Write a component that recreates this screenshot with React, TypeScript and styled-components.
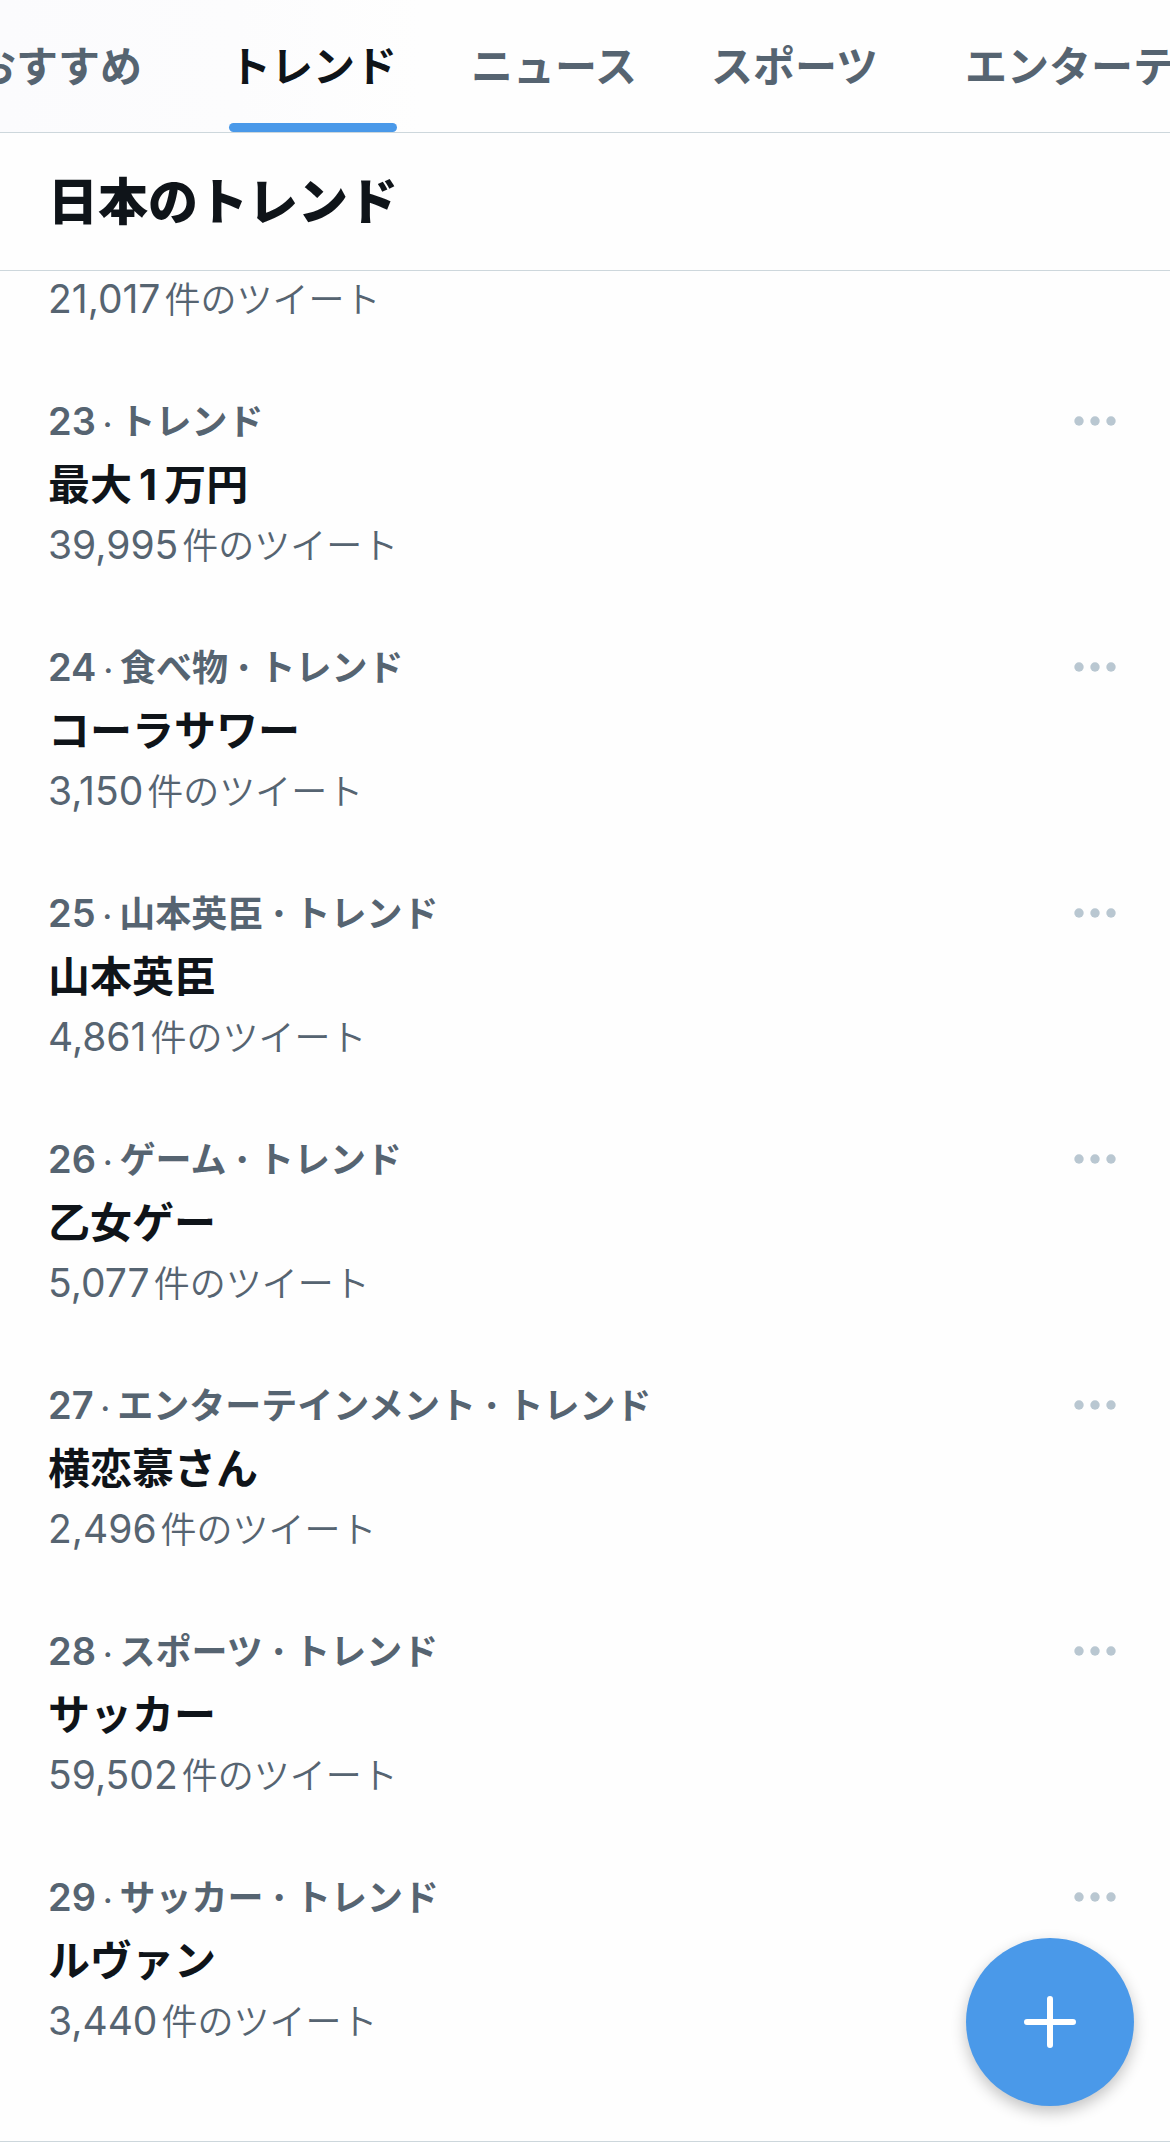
import React from 'react';
import styled, { createGlobalStyle } from 'styled-components';

const colors = {
  text: '#0f1419',
  muted: '#566471',
  line: '#cdd7dc',
  dots: '#b9c7d1',
  accent: '#4a99e9',
};

const GlobalStyle = createGlobalStyle`
  * {
    box-sizing: border-box;
  }
  body {
    margin: 0;
    background: #fefefe;
    color: ${colors.text};
    font-family: Inter, 'Noto Sans CJK JP', sans-serif;
    -webkit-font-smoothing: antialiased;
  }
  button {
    border: 0;
    background: none;
    font: inherit;
    cursor: pointer;
  }
`;

const Page = styled.div`
  min-height: 100vh;
  overflow: hidden;
  border-bottom: 1px solid ${colors.line};
`;

const TabBar = styled.nav`
  overflow: hidden;
  border-bottom: 1px solid ${colors.line};
  background: linear-gradient(to right, #fbfbfd, #fcfcfd 20%, #fefefe 36%);
`;

const TabList = styled.div`
  display: flex;
  width: max-content;
  margin-left: -76px;
`;

const Tab = styled.button<{ $active?: boolean; $wide?: boolean }>`
  display: flex;
  flex: none;
  height: 132px;
  padding: 0 ${(p) => (p.$wide ? 50 : 37)}px;
  color: ${(p) => (p.$active ? colors.text : colors.muted)};
  font-family: 'Noto Sans CJK JP', sans-serif;
  font-size: 42px;
  font-weight: 700;
  white-space: nowrap;
`;

const TabLabel = styled.span<{ $active?: boolean }>`
  display: flex;
  align-items: center;
  height: 132px;
  padding-bottom: 6px;
  position: relative;

  &::after {
    content: '';
    position: absolute;
    right: 0;
    bottom: 0;
    left: 0;
    height: 9px;
    border-radius: 5px;
    background: ${(p) => (p.$active ? colors.accent : 'transparent')};
  }
`;

const Header = styled.header`
  display: flex;
  align-items: center;
  height: 138px;
  padding: 0 48px 7px;
  border-bottom: 1px solid ${colors.line};
`;

const Heading = styled.h1`
  margin: 0;
  font-family: 'Noto Sans CJK JP', sans-serif;
  font-size: 50px;
  font-weight: 900;
  line-height: 60px;
`;

const List = styled.main`
  padding-top: 2px;
`;

const PartialRow = styled.article`
  padding: 0 48px 37px;
`;

const Row = styled.article`
  display: flex;
  justify-content: space-between;
  align-items: flex-start;
  padding: 37px 48px;
`;

const Meta = styled.div`
  display: flex;
  align-items: baseline;
  height: 48px;
  color: ${colors.muted};
  font-weight: 600;
  line-height: 48px;
`;

const Rank = styled.span`
  font-size: 38px;
`;

const Dot = styled.span`
  margin: 0 7px;
  font-size: 30px;
`;

const Category = styled.span`
  font-family: 'Noto Sans CJK JP', sans-serif;
  font-size: 36px;
  font-weight: 700;
`;

const Separator = styled.span`
  margin: 0 9px;
  font-family: Inter, sans-serif;
  font-size: 38px;
  font-weight: 800;
`;

const Title = styled.h2`
  height: 58px;
  margin: 13px 0 5px;
  font-size: 42px;
  font-weight: 700;
  line-height: 58px;
`;

const Digits = styled.span`
  margin: 0 7px;
`;

const Count = styled.div`
  display: flex;
  align-items: baseline;
  gap: 4px;
  height: 48px;
  color: ${colors.muted};
  font-size: 39px;
  line-height: 48px;
`;

const Unit = styled.span`
  font-family: 'Noto Sans CJK JP', sans-serif;
  font-size: 36px;
  font-weight: 350;
`;

const MoreButton = styled.button`
  display: flex;
  align-items: center;
  justify-content: center;
  width: 54px;
  height: 52px;
  padding: 0;
  color: ${colors.dots};
`;

const AddButton = styled.button`
  position: fixed;
  right: 36px;
  bottom: 36px;
  display: flex;
  align-items: center;
  justify-content: center;
  width: 168px;
  height: 168px;
  padding: 0;
  border-radius: 50%;
  background: ${colors.accent};
  color: #fff;
  box-shadow: 0 6px 15px rgba(0, 0, 0, 0.24);
`;

const tabs = [
  { label: 'おすすめ', wide: true },
  { label: 'トレンド', active: true },
  { label: 'ニュース' },
  { label: 'スポーツ' },
  { label: 'エンターテインメント', wide: true },
];

const trends = [
  { rank: 23, categories: ['トレンド'], title: '最大1万円', count: '39,995' },
  { rank: 24, categories: ['食べ物', 'トレンド'], title: 'コーラサワー', count: '3,150' },
  { rank: 25, categories: ['山本英臣', 'トレンド'], title: '山本英臣', count: '4,861' },
  { rank: 26, categories: ['ゲーム', 'トレンド'], title: '乙女ゲー', count: '5,077' },
  { rank: 27, categories: ['エンターテインメント', 'トレンド'], title: '横恋慕さん', count: '2,496' },
  { rank: 28, categories: ['スポーツ', 'トレンド'], title: 'サッカー', count: '59,502' },
  { rank: 29, categories: ['サッカー', 'トレンド'], title: 'ルヴァン', count: '3,440' },
];

function TweetCount({ value }: { value: string }) {
  return (
    <Count>
      <span>{value}</span>
      <Unit>件のツイート</Unit>
    </Count>
  );
}

function TrendTitle({ text }: { text: string }) {
  return (
    <Title>
      {text.split(/(\d+)/).map((part, i) => (i % 2 ? <Digits key={i}>{part}</Digits> : part))}
    </Title>
  );
}

export default function App() {
  return (
    <Page lang="ja">
      <GlobalStyle />
      <TabBar>
        <TabList role="tablist">
          {tabs.map((t) => (
            <Tab key={t.label} role="tab" aria-selected={!!t.active} $active={t.active} $wide={t.wide}>
              <TabLabel $active={t.active}>{t.label}</TabLabel>
            </Tab>
          ))}
        </TabList>
      </TabBar>
      <Header>
        <Heading>日本のトレンド</Heading>
      </Header>
      <List>
        <PartialRow>
          <TweetCount value="21,017" />
        </PartialRow>
        {trends.map((t) => (
          <Row key={t.rank}>
            <div>
              <Meta>
                <Rank>{t.rank}</Rank>
                <Dot>·</Dot>
                {t.categories.map((name, i) => (
                  <React.Fragment key={name}>
                    {i > 0 && <Separator>·</Separator>}
                    <Category>{name}</Category>
                  </React.Fragment>
                ))}
              </Meta>
              <TrendTitle text={t.title} />
              <TweetCount value={t.count} />
            </div>
            <MoreButton aria-label="もっと見る">
              <svg width="42" height="10" viewBox="0 0 42 10" fill="currentColor" aria-hidden="true">
                <circle cx="5" cy="5" r="4.7" />
                <circle cx="21" cy="5" r="4.7" />
                <circle cx="37" cy="5" r="4.7" />
              </svg>
            </MoreButton>
          </Row>
        ))}
      </List>
      <AddButton aria-label="ツイートする">
        <svg width="52" height="52" viewBox="0 0 52 52" fill="none" stroke="currentColor" strokeWidth="6" strokeLinecap="round" aria-hidden="true">
          <path d="M26 3v46M3 26h46" />
        </svg>
      </AddButton>
    </Page>
  );
}
